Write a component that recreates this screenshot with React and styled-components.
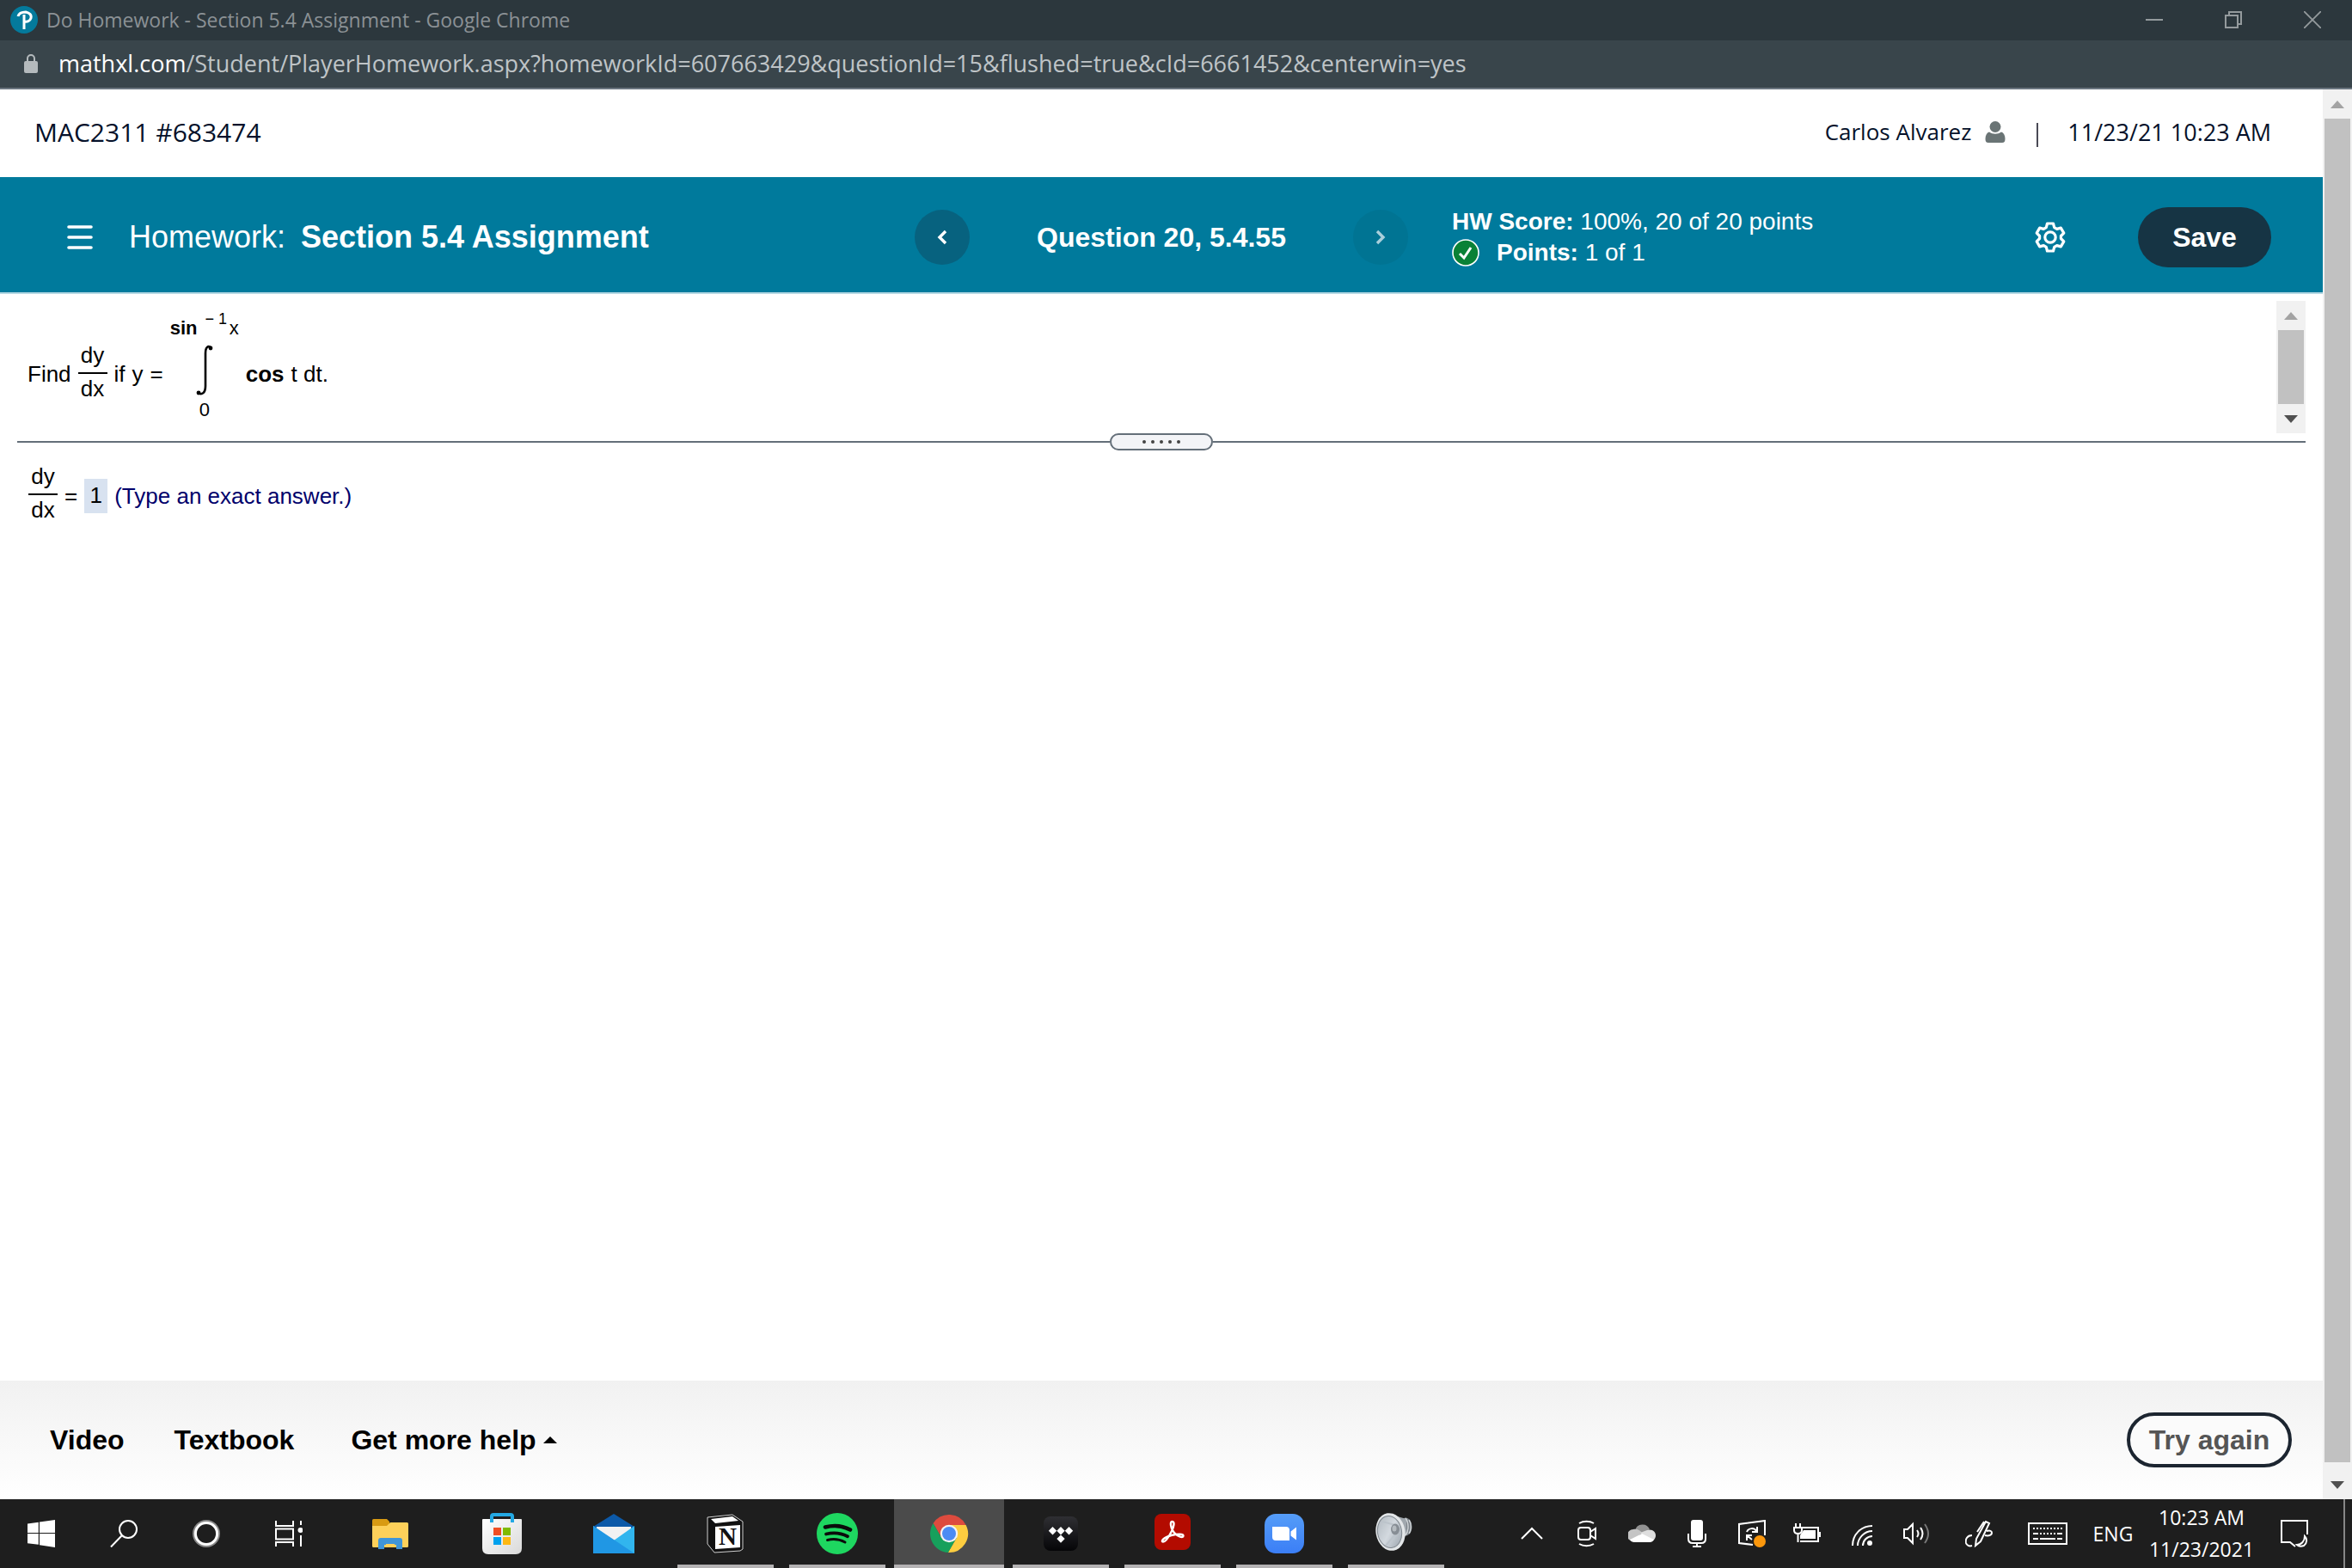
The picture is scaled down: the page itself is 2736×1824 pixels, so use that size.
import styled, { createGlobalStyle } from "styled-components";

const GlobalStyle = createGlobalStyle`
  * {
    box-sizing: border-box;
  }
  body {
    background-color: #fff;
    color: #000;
    font-family: "Liberation Sans", Arial, sans-serif;
    margin: 0;
  }
  button {
    align-items: center;
    background: none;
    border: none;
    color: inherit;
    cursor: pointer;
    display: flex;
    font-family: inherit;
    justify-content: center;
    margin: 0;
    padding: 0;
  }
  a {
    color: inherit;
    text-decoration: none;
  }
  svg {
    display: block;
    flex-shrink: 0;
  }
`;

const Screen = styled.div`
  display: flex;
  flex-direction: column;
  min-height: 100vh;
`;

/* browser window */

const TitleBar = styled.div`
  align-items: center;
  background-color: #2c373d;
  color: #8b9195;
  display: flex;
  font-family: "Open Sans", sans-serif;
  font-size: 23px;
  gap: 10px;
  height: 47px;
  line-height: 30px;
  padding: 0 0 2px 12px;
`;

const WindowTitle = styled.span`
  flex-grow: 1;
`;

const WindowButtons = styled.div`
  display: flex;
`;

const WindowButton = styled.button`
  height: 42px;
  width: 92px;
`;

const AddressBar = styled.div`
  align-items: center;
  background-color: #39454b;
  border-bottom: 2px solid #6b7680;
  color: #bfc4c7;
  display: flex;
  font-family: "Open Sans", sans-serif;
  font-size: 27px;
  gap: 24px;
  height: 57px;
  line-height: 36px;
  padding: 0 0 2px 28px;
`;

const Domain = styled.span`
  color: #fff;
`;

const Viewport = styled.div`
  display: flex;
  flex-grow: 1;
`;

const Page = styled.main`
  display: flex;
  flex-direction: column;
  flex-grow: 1;
`;

const ScrollTrack = styled.div`
  background-color: #f1f1f1;
  display: flex;
  flex-direction: column;
  flex-shrink: 0;
  padding: 0 2px;
  width: 34px;
`;

const ScrollButton = styled.button`
  height: 34px;
`;

const ScrollThumb = styled.div`
  background-color: #c1c1c1;
  flex-grow: 1;
  margin-bottom: ${(props) => props.$rest || 0}px;
`;

/* course header */

const CourseHeader = styled.header`
  align-items: center;
  color: #05112a;
  display: flex;
  font-family: "Open Sans", sans-serif;
  height: 102px;
  padding: 0 60px 4px 40px;
`;

const CourseName = styled.span`
  flex-grow: 1;
  font-size: 30px;
`;

const UserName = styled.span`
  align-items: center;
  display: flex;
  font-size: 26px;
  gap: 16px;
`;

const HeaderDivider = styled.span`
  background-color: #4a4a55;
  height: 28px;
  margin: 8px 34px 0 36px;
  width: 2px;
`;

const HeaderDate = styled.span`
  font-size: 27px;
`;

/* assignment bar */

const AssignmentBar = styled.div`
  align-items: center;
  background-color: #007a9c;
  border-bottom: 2px solid #b5d8e3;
  color: #fff;
  display: grid;
  grid-template-columns: 1fr auto 1fr;
  height: 136px;
  padding-top: 6px;
`;

const AssignmentTitle = styled.div`
  align-items: center;
  display: flex;
  font-size: 36px;
  padding-left: 78px;
`;

const AssignmentLabel = styled.span`
  padding-left: 42px;
`;

const AssignmentName = styled.h1`
  font-size: 36px;
  margin: 0;
  padding-left: 18px;
`;

const QuestionNav = styled.nav`
  align-items: center;
  display: flex;
  justify-content: space-between;
  width: 574px;
`;

const QuestionName = styled.h2`
  font-size: 32px;
  margin: 0;
`;

const NavButton = styled.button`
  background-color: ${(props) => (props.disabled ? "#007493" : "#07627f")};
  border-radius: 50%;
  color: ${(props) => (props.disabled ? "#a9cfdb" : "#fff")};
  height: 64px;
  width: 64px;
`;

const ScoreArea = styled.div`
  align-items: center;
  display: flex;
  padding: 0 60px 0 51px;
`;

const Score = styled.div`
  flex-grow: 1;
  font-size: 28px;
  line-height: 36px;
`;

const ScoreRow = styled.div`
  align-items: center;
  display: flex;
  gap: 20px;
`;

const SettingsButton = styled.button`
  margin-right: 84px;
`;

const SaveButton = styled.button`
  background-color: #163444;
  border-radius: 35px;
  font-size: 32px;
  font-weight: 700;
  height: 70px;
  width: 155px;
`;

/* question */

const QuestionPanel = styled.section`
  display: flex;
  justify-content: space-between;
  height: 162px;
  padding: 8px 20px 0;
`;

const MathRow = styled.div`
  align-items: center;
  display: flex;
  font-size: 26px;
  gap: 8px;
  line-height: 30px;
`;

const QuestionText = styled(MathRow)`
  align-self: flex-start;
  padding: 19px 0 0 12px;
`;

const FractionBox = styled.span`
  display: flex;
  flex-direction: column;
  padding-bottom: 6px;
  text-align: center;
  width: 34px;
`;

const Numerator = styled.span`
  border-bottom: 2px solid #000;
  padding-bottom: 5px;
`;

const Denominator = styled.span`
  padding-top: 2px;
`;

const IntegralBox = styled.span`
  align-items: center;
  display: flex;
  flex-direction: column;
  font-size: 22px;
  line-height: 26px;
  padding-bottom: 11px;
  width: 80px;
`;

const IntegralSign = styled.svg`
  margin: 6px 0 3px;
`;

const UpperLimit = styled.span`
  display: flex;
  justify-content: space-between;
  width: 80px;
`;

const Exponent = styled.sup`
  font-size: 18px;
  line-height: 4px;
  padding-left: 6px;
`;

const Splitter = styled.div`
  align-items: center;
  display: flex;
  height: 20px;
  padding: 0 20px;
`;

const SplitLine = styled.div`
  background-color: #646f79;
  flex-grow: 1;
  height: 2px;
`;

const SplitHandle = styled.button`
  background-color: #f3f4f7;
  border: 2px solid #646f79;
  border-radius: 10px;
  gap: 6px;
  height: 20px;
  width: 120px;
`;

const Dot = styled.span`
  background-color: #444;
  border-radius: 50%;
  height: 4px;
  width: 4px;
`;

const AnswerPanel = styled.section`
  flex-grow: 1;
  padding: 15px 20px 0 33px;
`;

const AnswerInput = styled.input`
  background-color: #d8e2f0;
  border: none;
  color: #000;
  font-family: inherit;
  font-size: 26px;
  height: 40px;
  padding: 0;
  text-align: center;
  width: 27px;
`;

const AnswerHint = styled.label`
  color: #00006b;
`;

/* help footer */

const HelpFooter = styled.footer`
  align-items: center;
  background: linear-gradient(#f1f1f1, #fff);
  display: flex;
  font-size: 32px;
  font-weight: 700;
  gap: 58px;
  height: 138px;
  padding: 0 36px 0 58px;
`;

const HelpButton = styled.button`
  font-size: 32px;
  font-weight: 700;
  gap: 8px;
  margin-left: 8px;
`;

const TryAgainButton = styled.button`
  background-color: #fbfbfb;
  border: 4px solid #1c2530;
  border-radius: 32px;
  color: #555;
  font-size: 32px;
  font-weight: 700;
  height: 64px;
  margin-left: auto;
  width: 192px;
`;

/* taskbar */

const Taskbar = styled.div`
  background-color: #1e1e1e;
  color: #fff;
  display: flex;
  font-family: "Open Sans", sans-serif;
  height: 80px;
`;

const SystemButton = styled.button`
  width: 96px;
`;

const Apps = styled.div`
  display: flex;
  flex-grow: 1;
  gap: 2px;
  padding-left: 6px;
`;

const AppButton = styled.button`
  background-color: ${(props) => (props.$active ? "#4b4b4b" : "transparent")};
  position: relative;
  width: 128px;

  &::after {
    background-color: ${(props) => (props.$open ? "#b4b2b3" : "transparent")};
    bottom: 0;
    content: "";
    height: 4px;
    left: ${(props) => (props.$active ? 0 : 8)}px;
    position: absolute;
    right: ${(props) => (props.$active ? 0 : 8)}px;
  }
`;

const TrayButton = styled.button`
  font-size: 23px;
  line-height: 37px;
  width: ${(props) => props.$width || 64}px;
`;

const ShowDesktop = styled.button`
  border-left: 2px solid #868686;
  margin-left: 16px;
  width: 10px;
`;

function Fraction() {
  return (
    <FractionBox>
      <Numerator>dy</Numerator>
      <Denominator>dx</Denominator>
    </FractionBox>
  );
}

function Arrow({ down, color, width = 18, height = 9 }) {
  return (
    <svg width={width} height={height} viewBox="0 0 18 9" preserveAspectRatio="none">
      <path d={down ? "M0 0h18L9 9z" : "M0 9h18L9 0z"} fill={color} />
    </svg>
  );
}

function Scrollbar({ rest }) {
  return (
    <ScrollTrack>
      <ScrollButton aria-label="Scroll up">
        <Arrow color="#a3a3a3" width={16} />
      </ScrollButton>
      <ScrollThumb $rest={rest} />
      <ScrollButton aria-label="Scroll down">
        <Arrow down color="#505050" width={16} />
      </ScrollButton>
    </ScrollTrack>
  );
}

function PearsonIcon() {
  return (
    <svg width="32" height="32" viewBox="0 0 32 32">
      <circle cx="16" cy="16" r="16" fill="#047a9c" />
      <path
        d="M9 12c1-4 5-5 9-5 4 1 7 3 6 7-1 3-4 5-8 4M16 10v17"
        fill="none"
        stroke="#fff"
        strokeWidth="3"
      />
    </svg>
  );
}

function LockIcon() {
  return (
    <svg width="16" height="22" viewBox="0 0 16 22">
      <rect y="8" width="16" height="14" rx="2" fill="#b4babd" />
      <path d="M4 9V5a4 4 0 0 1 8 0v4" fill="none" stroke="#b4babd" strokeWidth="2" />
    </svg>
  );
}

function UserIcon() {
  return (
    <svg width="24" height="25" viewBox="0 0 24 25" fill="#6a7475">
      <ellipse cx="12" cy="6.5" rx="6.5" ry="6.5" />
      <path d="M5 12.500c4 3 10 3 14 0 3 1 4.500 4 4.500 8 0 3-1 4.500-3.500 4.500H4C1.500 25 .5 23.500 .5 20.500c0-4 1.500-7 4.500-8z" />
    </svg>
  );
}

function MenuIcon() {
  return (
    <svg width="30" height="28" viewBox="0 0 30 28" stroke="#fff" strokeWidth="3.600" strokeLinecap="round">
      <path d="M2 2h26M2 14h26M2 26h26" />
    </svg>
  );
}

function ChevronIcon({ right }) {
  return (
    <svg width="12" height="18" viewBox="0 0 12 18" fill="none" stroke="currentColor" strokeWidth="3.400">
      <path d={right ? "M2 2l7 7-7 7" : "M10 2L3 9l7 7"} />
    </svg>
  );
}

function CheckIcon() {
  return (
    <svg width="32" height="32" viewBox="0 0 32 32" fill="none" stroke="#fff">
      <circle cx="16" cy="16" r="15" fill="#0a8136" strokeWidth="1.600" />
      <path d="M9 17l5 5 8-12" strokeWidth="3" />
    </svg>
  );
}

function GearIcon() {
  return (
    <svg width="36" height="36" viewBox="0 0 36 36" fill="none" stroke="#fff" strokeWidth="3.200" strokeLinejoin="round">
      <path d="M14.500 2h7l1.200 4.600 3 1.800 4.600-1.300 3.500 6-3.400 3.400v3l3.400 3.400-3.500 6-4.600-1.300-3 1.800L21.500 34h-7l-1.200-4.600-3-1.800-4.600 1.300-3.500-6 3.400-3.400v-3L2.200 13.100l3.500-6 4.600 1.300 3-1.800z" />
      <circle cx="18" cy="18" r="6.200" />
    </svg>
  );
}

function MinimizeIcon() {
  return (
    <svg width="20" height="20" viewBox="0 0 20 20" stroke="#949a9d" strokeWidth="2">
      <path d="M0 10h20" />
    </svg>
  );
}

function RestoreIcon() {
  return (
    <svg width="20" height="20" viewBox="0 0 20 20" fill="none" stroke="#949a9d" strokeWidth="2">
      <path d="M1 5h14v14H1zM5 5V1h14v14h-4" />
    </svg>
  );
}

function CloseIcon() {
  return (
    <svg width="20" height="20" viewBox="0 0 20 20" stroke="#949a9d" strokeWidth="1.800">
      <path d="M0 0l20 20M20 0L0 20" />
    </svg>
  );
}

function WindowsIcon() {
  return (
    <svg width="32" height="32" viewBox="0 0 32 32" fill="#fff">
      <path d="M0 4.500L12.800 2.700V15H0zM14 2.500L32 0v15H14zM0 16h12.800v12.800L0 27.200zM14 16h18v16l-18-2.800z" />
    </svg>
  );
}

function SearchIcon() {
  return (
    <svg width="32" height="32" viewBox="0 0 32 32" fill="none" stroke="#fff" strokeWidth="2">
      <circle cx="21" cy="11" r="10" />
      <path d="M14 18L1 31.500" />
    </svg>
  );
}

function CortanaIcon() {
  return (
    <svg width="32" height="32" viewBox="0 0 32 32" fill="none">
      <circle cx="16" cy="16" r="14.500" stroke="#8a8a8a" strokeWidth="3" />
      <circle cx="16" cy="16" r="12.600" stroke="#fff" strokeWidth="3" />
    </svg>
  );
}

function TaskViewIcon() {
  return (
    <svg width="32" height="32" viewBox="0 0 32 32" fill="none" stroke="#fff" strokeWidth="2">
      <path d="M1 1v6h20V1M1 31v-5h20v5M1 10.500h20v12H1zM30 1v5M30 18v13" />
      <circle cx="29.500" cy="12" r="3" fill="#fff" stroke="none" />
    </svg>
  );
}

function ExplorerIcon() {
  return (
    <svg width="42" height="36" viewBox="0 0 42 36">
      <path d="M0 2.500Q0 1 1.500 1H17l3 3v6H0z" fill="#d89a13" />
      <path d="M0 9h17l4-4h19.500Q42 5 42 6.500v26Q42 34 40.500 34h-39Q0 34 0 32.500z" fill="#fdd05a" />
      <path d="M7 36V26q0-3 3-3h22q3 0 3 3v10h-7V32h-2v-2H16v2h-2v4z" fill="#3f95d8" />
      <path d="M14 31h14v3H14z" fill="#fdd05a" />
    </svg>
  );
}

function StoreIcon() {
  return (
    <svg width="46" height="48" viewBox="0 0 46 48">
      <defs>
        <linearGradient id="bag" x1="0" y1="0" x2="1" y2="1">
          <stop offset="0" stopColor="#fff" />
          <stop offset="1" stopColor="#d9d9d9" />
        </linearGradient>
      </defs>
      <path d="M0 8q0-1 1-1h44q1 0 1 1v33q0 7-7 7H7q-7 0-7-7z" fill="url(#bag)" />
      <path d="M11 11V4q0-2 2-2h20q2 0 2 2v7" fill="none" stroke="#24a9e4" strokeWidth="4" />
      <path d="M13 17h9v9h-9z" fill="#f04e23" />
      <path d="M24 17h9v9h-9z" fill="#7fba00" />
      <path d="M13 28h9v9h-9z" fill="#00a1ee" />
      <path d="M24 28h9v9h-9z" fill="#fdb813" />
    </svg>
  );
}

function MailIcon() {
  return (
    <svg width="48" height="46" viewBox="0 0 48 46">
      <path d="M0 15L24 0l24 15v6H0z" fill="#0c59a8" />
      <path d="M4 15h40v10L24 37 4 25z" fill="#f2f2f2" />
      <path d="M0 14l24 17 24-17v32H0z" fill="#31b5ee" />
      <path d="M0 14l48 32H0z" fill="#2097e4" />
    </svg>
  );
}

function NotionIcon() {
  return (
    <svg width="44" height="46" viewBox="0 0 44 46">
      <path d="M1 4L30 1l12 8v32L39 43 9 45 1 35z" fill="#111" stroke="#d0d0d0" strokeWidth="1" />
      <path d="M5 6l25-3 7 5-27 3z" fill="#fff" />
      <path d="M10 15l29-2v26l-29 2z" fill="#fff" />
      <text x="24.500" y="36" textAnchor="middle" fontFamily="Liberation Serif, serif" fontSize="29" fontWeight="700" fill="#111">
        N
      </text>
    </svg>
  );
}

function SpotifyIcon() {
  return (
    <svg width="48" height="48" viewBox="0 0 48 48" fill="none" stroke="#0b0b0b" strokeLinecap="round">
      <circle cx="24" cy="24" r="24" fill="#1ed760" stroke="none" />
      <path d="M10 16.500c10-2.600 20-1.800 29 3" strokeWidth="4.600" />
      <path d="M11 24.500c9-2.300 17-1.400 25 2.700" strokeWidth="3.800" />
      <path d="M12.500 31.500c7-1.700 14-1 20.500 2.500" strokeWidth="3" />
    </svg>
  );
}

function ChromeIcon() {
  return (
    <svg width="48" height="48" viewBox="0 0 48 48">
      <path d="M5.540 12.030A22 22 0 0 1 43.600 14H24L15.340 29z" fill="#dd4b3e" />
      <path d="M43.600 14A22 22 0 0 1 22.860 45.970L32.660 29 24 14z" fill="#fdcd40" />
      <path d="M22.860 45.970A22 22 0 0 1 5.540 12.030L15.340 29H32.660z" fill="#17a05c" />
      <circle cx="24" cy="24" r="10.200" fill="#f3f3f3" />
      <circle cx="24" cy="24" r="8" fill="#4b8bf4" />
    </svg>
  );
}

function TidalIcon() {
  return (
    <svg width="40" height="40" viewBox="0 0 40 40">
      <defs>
        <linearGradient id="tidal" x1="0" y1="0" x2="0" y2="1">
          <stop offset="0" stopColor="#2f2f33" />
          <stop offset="1" stopColor="#050507" />
        </linearGradient>
      </defs>
      <rect width="40" height="40" rx="8" fill="url(#tidal)" />
      <path
        d="M10.500 12l4.700 4.700-4.700 4.700-4.700-4.700zM20 12l4.700 4.700-4.700 4.700-4.700-4.700zM29.500 12l4.700 4.700-4.700 4.700-4.700-4.700zM20 21.400l4.700 4.700-4.700 4.700-4.700-4.700z"
        fill="#fff"
      />
    </svg>
  );
}

function AcrobatIcon() {
  return (
    <svg width="42" height="46" viewBox="0 0 42 46">
      <rect width="42" height="42" rx="8" fill="#b30b00" />
      <path
        d="M20.500 9c3.500 0 2 6-1 12-3 6-7 11.500-9.500 11.500-3 0 0-5 9.500-7.500 8-2 14-1.500 14 .5 0 3-6.500 1-10.500-3.500C19 17.500 17.500 9 20.500 9z"
        fill="none"
        stroke="#fff"
        strokeWidth="2.400"
      />
    </svg>
  );
}

function ZoomIcon() {
  return (
    <svg width="46" height="46" viewBox="0 0 46 46">
      <defs>
        <linearGradient id="zoom" x1="0" y1="0" x2="0" y2="1">
          <stop offset="0" stopColor="#559df8" />
          <stop offset="1" stopColor="#3b7ef6" />
        </linearGradient>
      </defs>
      <rect width="46" height="46" rx="13" fill="url(#zoom)" />
      <path d="M9 15h16q4 0 4 4v12H13q-4 0-4-4zM30.500 20.500l6.500-5v15l-6.500-5z" fill="#fff" />
    </svg>
  );
}

function SpeakerIcon() {
  return (
    <svg width="48" height="48" viewBox="0 0 48 48">
      <defs>
        <linearGradient id="cone" x1="0" y1="0" x2="1" y2="1">
          <stop offset="0" stopColor="#aeb6bd" />
          <stop offset="0.500" stopColor="#d3d9df" />
          <stop offset="1" stopColor="#98a1aa" />
        </linearGradient>
      </defs>
      <ellipse cx="35" cy="16" rx="7.500" ry="10.500" fill="#7b8288" />
      <path d="M22 3l14 4v18L26 38z" fill="#a0a7ad" />
      <path d="M35 6c4 5 4 15 0 20M39 8c3 4 3 12 0 16" fill="none" stroke="#d3d7da" strokeWidth="1.400" />
      <ellipse cx="17.500" cy="22" rx="17" ry="22" fill="#e3e6e8" transform="rotate(-10 17.500 22)" />
      <ellipse cx="16.500" cy="22" rx="14" ry="18.500" fill="url(#cone)" stroke="#80888f" transform="rotate(-10 16.500 22)" />
      <path d="M23 14L8 10M22 26L12 38" stroke="#bcc4cb" strokeWidth="2" />
      <ellipse cx="23" cy="19" rx="5" ry="6.500" fill="#868d94" />
      <ellipse cx="22" cy="18" rx="2.500" ry="3.500" fill="#b5bbc0" />
    </svg>
  );
}

function TrayIcon({ children, width = 32 }) {
  return (
    <svg width={width} height="32" viewBox={`0 0 ${width} 32`} fill="none" stroke="#fff" strokeWidth="2">
      {children}
    </svg>
  );
}

const systemButtons = [
  { name: "Start", Icon: WindowsIcon },
  { name: "Search", Icon: SearchIcon },
  { name: "Cortana", Icon: CortanaIcon },
  { name: "Task view", Icon: TaskViewIcon },
];

const apps = [
  { name: "File Explorer", Icon: ExplorerIcon },
  { name: "Microsoft Store", Icon: StoreIcon },
  { name: "Mail", Icon: MailIcon },
  { name: "Notion", Icon: NotionIcon, open: true },
  { name: "Spotify", Icon: SpotifyIcon, open: true },
  { name: "Google Chrome", Icon: ChromeIcon, open: true, active: true },
  { name: "Tidal", Icon: TidalIcon, open: true },
  { name: "Acrobat", Icon: AcrobatIcon, open: true },
  { name: "Zoom", Icon: ZoomIcon, open: true },
  { name: "Sound", Icon: SpeakerIcon, open: true },
];

function Tray() {
  return (
    <>
      <TrayButton aria-label="Show hidden icons">
        <TrayIcon>
          <path d="M4 22l12-12 12 12" />
        </TrayIcon>
      </TrayButton>
      <TrayButton aria-label="Meet now">
        <TrayIcon>
          <rect x="6" y="9" width="14" height="14" rx="3" />
          <path d="M20 14l6-4v12l-6-4M7 4c5-3 12-3 17 0M7 28c5 3 12 3 17 0" />
        </TrayIcon>
      </TrayButton>
      <TrayButton aria-label="OneDrive">
        <TrayIcon>
          <g stroke="none">
            <path d="M8 12a9 9 0 0 1 17-1l-9 7z" fill="#929292" />
            <path d="M6 25a7 7 0 0 1 0-14c4-1 8 1 10 4l-10 10z" fill="#c4c4c4" />
            <path d="M14 15l8-3c6-2 10 2 10 6s-3 7-6 7z" fill="#dedede" />
            <path d="M2 23l14-7 14 7c-1 1-2 3-5 3H7c-2 0-4-1-5-3z" fill="#fff" />
          </g>
        </TrayIcon>
      </TrayButton>
      <TrayButton aria-label="Microphone">
        <TrayIcon>
          <rect x="9" y="0" width="14" height="24" rx="3" fill="#fff" stroke="none" />
          <path d="M6 16v6q0 5 5 5h10q5 0 5-5v-6M16 27v4M11 31h10" />
        </TrayIcon>
      </TrayButton>
      <TrayButton aria-label="Windows Update">
        <TrayIcon>
          <path d="M17 29L1 27V5l30-4v17M10 14c2-5 9-5 11-1M22 8v6h-6M10 24v-6h6M10 18l6 5" />
          <circle cx="25" cy="25" r="7" fill="#fb970c" stroke="none" />
        </TrayIcon>
      </TrayButton>
      <TrayButton aria-label="Battery">
        <TrayIcon>
          <path d="M11 9h18v16H8M31 14v6M3 4v5M8 4v5M1 9h9v3q0 4-4.500 4T1 12zM5.500 16v10" />
          <path d="M12 12h14v10H8v-4z" fill="#fff" stroke="none" />
        </TrayIcon>
      </TrayButton>
      <TrayButton aria-label="Wi-Fi">
        <TrayIcon>
          <path d="M5 30C5 17 15 7 28 7M11 30c0-9 8-17 17-17M17 30c0-6 5-11 11-11" />
          <circle cx="25" cy="27" r="3" fill="#fff" stroke="none" />
        </TrayIcon>
      </TrayButton>
      <TrayButton aria-label="Volume">
        <TrayIcon>
          <path d="M1 11h4l6-6v22l-6-6H1zM16 12q3 4 0 8M20 9q5 7 0 14" />
          <path d="M25 5q8 11 0 22" stroke="#777" />
        </TrayIcon>
      </TrayButton>
      <TrayButton $width={80} aria-label="Windows Ink">
        <TrayIcon>
          <path d="M12 30l1-8L24 2l4 2-10 21zM14 14l8-12M8 18c-6 0-8 5-7 9 1 3 4 4 7 3M25 13c4-1 6 0 6 2 0 3-4 4-8 3" />
        </TrayIcon>
      </TrayButton>
      <TrayButton $width={80} aria-label="Touch keyboard">
        <TrayIcon width={46}>
          <path d="M1 4h44v24H1z" />
          <path d="M6 10h34M6 16h34" strokeDasharray="2 2" />
          <path d="M6 16h5M34 16h6M6 22h6M14 22h18M34 22h6" />
        </TrayIcon>
      </TrayButton>
      <TrayButton $width={72}>ENG</TrayButton>
      <TrayButton $width={134}>
        <span>
          10:23 AM
          <br />
          11/23/2021
        </span>
      </TrayButton>
      <TrayButton $width={82} aria-label="Notifications">
        <TrayIcon>
          <path d="M17 31l-6-5H1V1h30v16" />
          <path d="M28 19c3 3 3 8-1 11-3 1-6 1-8-1 5 0 9-4 9-10z" />
        </TrayIcon>
      </TrayButton>
      <ShowDesktop aria-label="Show desktop" />
    </>
  );
}

function App() {
  return (
    <Screen>
      <GlobalStyle />
      <TitleBar>
        <PearsonIcon />
        <WindowTitle>Do Homework - Section 5.4 Assignment - Google Chrome</WindowTitle>
        <WindowButtons>
          <WindowButton aria-label="Minimize">
            <MinimizeIcon />
          </WindowButton>
          <WindowButton aria-label="Restore">
            <RestoreIcon />
          </WindowButton>
          <WindowButton aria-label="Close">
            <CloseIcon />
          </WindowButton>
        </WindowButtons>
      </TitleBar>
      <AddressBar>
        <LockIcon />
        <span>
          <Domain>mathxl.com</Domain>
          /Student/PlayerHomework.aspx?homeworkId=607663429&amp;questionId=15&amp;flushed=true&amp;cId=6661452&amp;centerwin=yes
        </span>
      </AddressBar>

      <Viewport>
        <Page>
          <CourseHeader>
            <CourseName>MAC2311 #683474</CourseName>
            <UserName>
              Carlos Alvarez
              <UserIcon />
            </UserName>
            <HeaderDivider />
            <HeaderDate>11/23/21 10:23 AM</HeaderDate>
          </CourseHeader>

          <AssignmentBar>
            <AssignmentTitle>
              <button aria-label="Menu">
                <MenuIcon />
              </button>
              <AssignmentLabel>Homework:</AssignmentLabel>
              <AssignmentName>Section 5.4 Assignment</AssignmentName>
            </AssignmentTitle>
            <QuestionNav>
              <NavButton aria-label="Previous question">
                <ChevronIcon />
              </NavButton>
              <QuestionName>Question 20, 5.4.55</QuestionName>
              <NavButton aria-label="Next question" disabled>
                <ChevronIcon right />
              </NavButton>
            </QuestionNav>
            <ScoreArea>
              <Score>
                <div>
                  <b>HW Score:</b> 100%, 20 of 20 points
                </div>
                <ScoreRow>
                  <CheckIcon />
                  <span>
                    <b>Points:</b> 1 of 1
                  </span>
                </ScoreRow>
              </Score>
              <SettingsButton aria-label="Settings">
                <GearIcon />
              </SettingsButton>
              <SaveButton>Save</SaveButton>
            </ScoreArea>
          </AssignmentBar>

          <QuestionPanel>
            <QuestionText>
              <span>Find</span>
              <Fraction />
              <span>if</span>
              <span>y</span>
              <span>=</span>
              <IntegralBox>
                <UpperLimit>
                  <b>sin</b>
                  <Exponent>− 1</Exponent>
                  <span>x</span>
                </UpperLimit>
                <IntegralSign width="20" height="60" viewBox="0 0 20 60">
                  <path
                    d="M18 4C14 0 11 3 11 10v38c0 8-4 11-9 8"
                    fill="none"
                    stroke="#000"
                    strokeWidth="2.600"
                  />
                  <circle cx="17" cy="4" r="2.400" />
                  <circle cx="3" cy="56" r="2.400" />
                </IntegralSign>
                <span>0</span>
              </IntegralBox>
              <b>cos</b>
              <span>t dt.</span>
            </QuestionText>
            <Scrollbar />
          </QuestionPanel>
          <Splitter>
            <SplitLine />
            <SplitHandle aria-label="Resize question panel">
              <Dot />
              <Dot />
              <Dot />
              <Dot />
              <Dot />
            </SplitHandle>
            <SplitLine />
          </Splitter>
          <AnswerPanel>
            <MathRow>
              <Fraction />
              <span>=</span>
              <AnswerInput id="answer" defaultValue="1" />
              <AnswerHint htmlFor="answer">(Type an exact answer.)</AnswerHint>
            </MathRow>
          </AnswerPanel>

          <HelpFooter>
            <a href="#video">Video</a>
            <a href="#textbook">Textbook</a>
            <HelpButton>
              Get more help
              <Arrow color="#000" width={16} height={8} />
            </HelpButton>
            <TryAgainButton>Try again</TryAgainButton>
          </HelpFooter>
        </Page>
        <Scrollbar rest={9} />
      </Viewport>

      <Taskbar>
        {systemButtons.map(({ name, Icon }) => (
          <SystemButton key={name} aria-label={name}>
            <Icon />
          </SystemButton>
        ))}
        <Apps>
          {apps.map(({ name, Icon, open, active }) => (
            <AppButton key={name} aria-label={name} $open={open} $active={active}>
              <Icon />
            </AppButton>
          ))}
        </Apps>
        <Tray />
      </Taskbar>
    </Screen>
  );
}

export default App;
